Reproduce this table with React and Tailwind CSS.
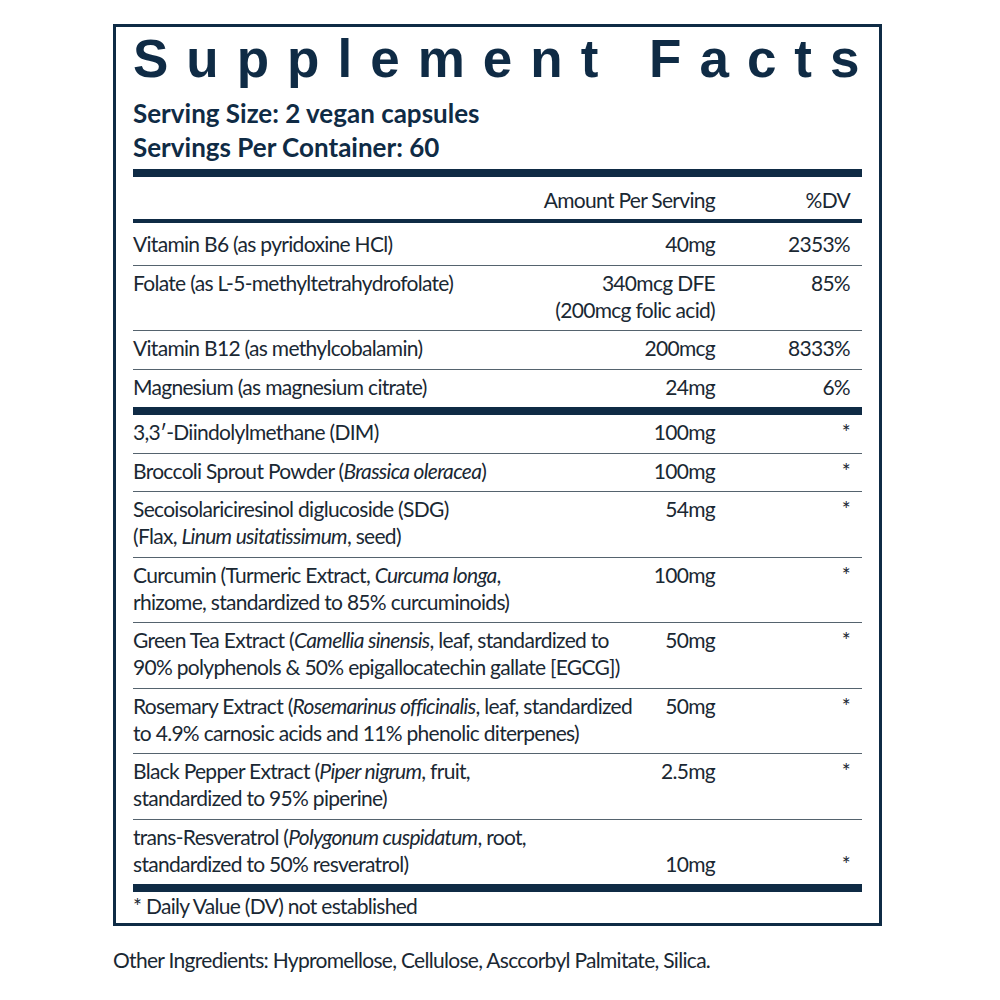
import React from "react";

const rowsTop = [
  { name: "Vitamin B6 (as pyridoxine HCl)", amount: "40mg", dv: "2353%", first: true },
  {
    name: "Folate (as L-5-methyltetrahydrofolate)",
    amount: (
      <>
        340mcg DFE
        <br />
        (200mcg folic acid)
      </>
    ),
    dv: "85%",
  },
  { name: "Vitamin B12 (as methylcobalamin)", amount: "200mcg", dv: "8333%" },
  { name: "Magnesium (as magnesium citrate)", amount: "24mg", dv: "6%", last: true },
];

const rowsBottom = [
  { name: "3,3\u2032-Diindolylmethane (DIM)", amount: "100mg" },
  {
    name: (
      <>
        Broccoli Sprout Powder (<i>Brassica oleracea</i>)
      </>
    ),
    amount: "100mg",
  },
  {
    name: (
      <>
        Secoisolariciresinol diglucoside (SDG)
        <br />
        (Flax, <i>Linum usitatissimum</i>, seed)
      </>
    ),
    amount: "54mg",
  },
  {
    name: (
      <>
        Curcumin (Turmeric Extract, <i>Curcuma longa</i>,
        <br />
        rhizome, standardized to 85% curcuminoids)
      </>
    ),
    amount: "100mg",
  },
  {
    name: (
      <>
        Green Tea Extract (<i>Camellia sinensis</i>, leaf, standardized to
        <br />
        90% polyphenols &amp; 50% epigallocatechin gallate [EGCG])
      </>
    ),
    amount: "50mg",
  },
  {
    name: (
      <>
        Rosemary Extract (<i>Rosemarinus officinalis</i>, leaf, standardized
        <br />
        to 4.9% carnosic acids and 11% phenolic diterpenes)
      </>
    ),
    amount: "50mg",
  },
  {
    name: (
      <>
        Black Pepper Extract (<i>Piper nigrum</i>, fruit,
        <br />
        standardized to 95% piperine)
      </>
    ),
    amount: "2.5mg",
  },
  {
    name: (
      <>
        trans-Resveratrol (<i>Polygonum cuspidatum</i>, root,
        <br />
        standardized to 50% resveratrol)
      </>
    ),
    amount: "10mg",
    last: true,
    bottom: true,
  },
];

function Row({ row }) {
  return (
    <div
      className={`flex leading-[27px] pb-[7.5px] ${row.first ? "pt-[7px]" : "pt-[3px]"} ${
        row.last ? "" : "border-b border-[#55636e]"
      } ${row.bottom ? "items-end" : "items-start"}`}
    >
      <div className="flex-1 min-w-0 whitespace-nowrap">{row.name}</div>
      <div className="shrink-0 pl-[8px] text-right whitespace-nowrap">{row.amount}</div>
      <div className="w-[147px] shrink-0 pr-[12px] text-right">{row.dv || "*"}</div>
    </div>
  );
}

export default function App() {
  return (
    <div className="min-h-screen bg-white pt-[24px] pl-[113px] text-[#1a2833] font-['Lato',sans-serif] text-[21px] tracking-[-0.7px]">
      <div className="w-[769px] border-[3px] border-[#0f2b45] px-[17px]">
        <h1 className="pt-[2px] leading-[60px] text-[53px] font-bold tracking-[18px] text-[#0f2b45] font-['Liberation_Sans',Arial,sans-serif] whitespace-nowrap">
          Supplement Facts
        </h1>
        <div className="mt-[7px] text-[26px] leading-[34px] font-bold tracking-normal text-[#0f2b45]">
          <div>Serving Size: 2 vegan capsules</div>
          <div>Servings Per Container: 60</div>
        </div>
        <div className="mt-[5px] h-[8px] bg-[#0f2b45]" />
        <div className="flex leading-[27px] pt-[9px] pb-[6px]">
          <div className="flex-1" />
          <div className="text-right">Amount Per Serving</div>
          <div className="w-[147px] pr-[12px] text-right">%DV</div>
        </div>
        <div className="h-[4px] bg-[#0f2b45]" />
        {rowsTop.map((row, i) => (
          <Row key={i} row={row} />
        ))}
        <div className="h-[8px] bg-[#0f2b45]" />
        {rowsBottom.map((row, i) => (
          <Row key={i} row={row} />
        ))}
        <div className="h-[8px] bg-[#0f2b45]" />
        <div className="leading-[27px] pb-[4px]">* Daily Value (DV) not established</div>
      </div>
      <p className="mt-[20px] leading-[27px]">
        Other Ingredients: Hypromellose, Cellulose, Asccorbyl Palmitate, Silica.
      </p>
    </div>
  );
}
